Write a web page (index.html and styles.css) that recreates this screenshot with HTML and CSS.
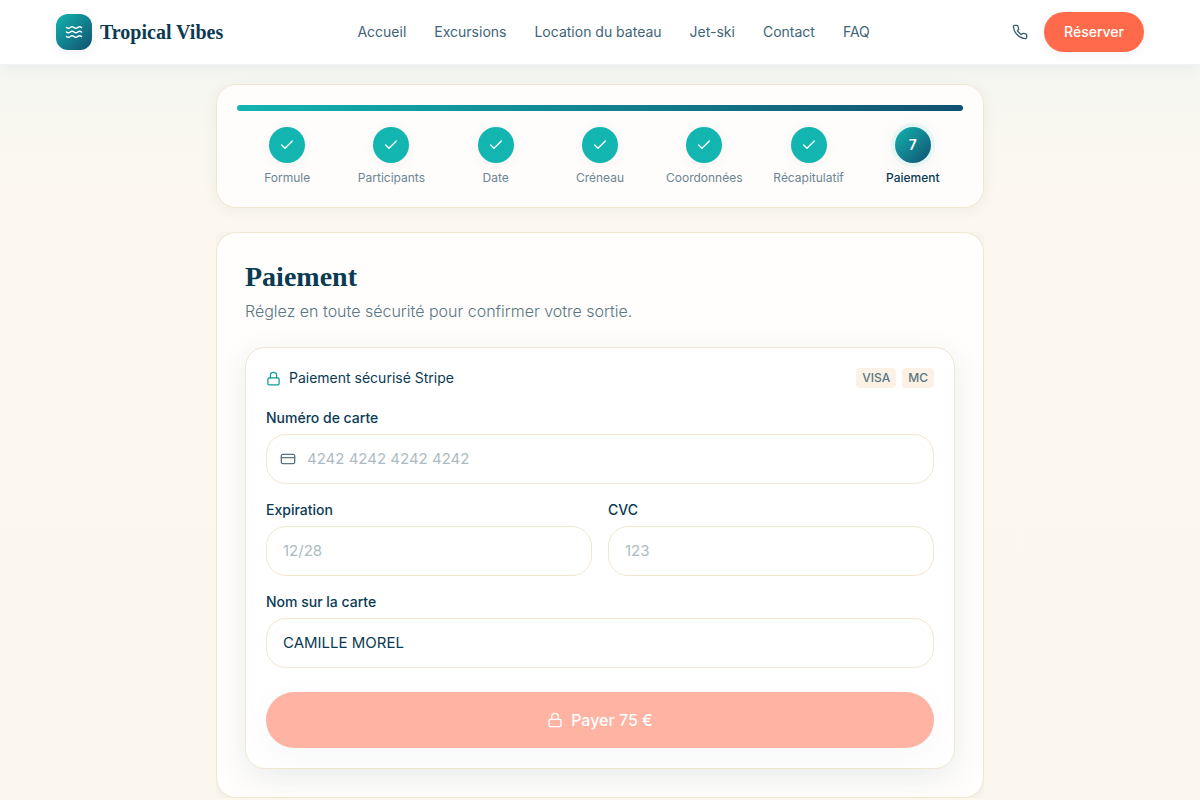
FILE: index.html
```html
<!DOCTYPE html>
<html lang="fr">
<head>
<meta charset="utf-8">
<meta name="viewport" content="width=device-width, initial-scale=1">
<title>Tropical Vibes – Paiement</title>
<link rel="stylesheet" href="styles.css">
</head>
<body>
<svg class="sprite" aria-hidden="true">
  <symbol id="check" viewBox="0 0 24 24"><path d="M20 6 9 17l-5-5"/></symbol>
  <symbol id="lock" viewBox="0 0 24 24"><rect x="3" y="11" width="18" height="11" rx="2"/><path d="M7 11V7a5 5 0 0 1 10 0v4"/></symbol>
</svg>
<header class="header">
  <div class="header-inner">
    <a class="brand" href="#">
      <span class="logo"><svg class="icon icon-18" viewBox="0 0 24 24"><path d="M2 6c.6.5 1.200 1 2.500 1C7 7 7 5 9.500 5c2.600 0 2.400 2 5 2 2.500 0 2.500-2 5-2 1.300 0 1.900.5 2.500 1"/><path d="M2 12c.6.5 1.200 1 2.500 1 2.500 0 2.500-2 5-2 2.600 0 2.400 2 5 2 2.500 0 2.500-2 5-2 1.300 0 1.900.5 2.500 1"/><path d="M2 18c.6.5 1.200 1 2.500 1 2.500 0 2.500-2 5-2 2.600 0 2.400 2 5 2 2.500 0 2.500-2 5-2 1.300 0 1.900.5 2.500 1"/></svg></span>
      <span class="brand-name">Tropical Vibes</span>
    </a>
    <nav class="nav" aria-label="Navigation principale">
      <a href="#">Accueil</a>
      <a href="#">Excursions</a>
      <a href="#">Location du bateau</a>
      <a href="#">Jet-ski</a>
      <a href="#">Contact</a>
      <a href="#">FAQ</a>
    </nav>
    <div class="actions">
      <a class="phone" href="#" aria-label="Téléphone"><svg class="icon icon-16" viewBox="0 0 24 24"><path d="M22 16.920v3a2 2 0 0 1-2.180 2 19.790 19.790 0 0 1-8.630-3.070 19.500 19.500 0 0 1-6-6 19.790 19.790 0 0 1-3.070-8.670A2 2 0 0 1 4.110 2h3a2 2 0 0 1 2 1.720 12.840 12.840 0 0 0 .7 2.810 2 2 0 0 1-.45 2.110L8.090 9.910a16 16 0 0 0 6 6l1.270-1.270a2 2 0 0 1 2.110-.45 12.840 12.840 0 0 0 2.810.7A2 2 0 0 1 22 16.920z"/></svg></a>
      <button class="reserve" type="button">Réserver</button>
    </div>
  </div>
</header>
<main class="main">
  <section class="stepper" aria-label="Étapes">
    <div class="progress"></div>
    <ol class="steps">
      <li><span class="dot"><svg class="icon icon-16" viewBox="0 0 24 24"><use href="#check"/></svg></span><span>Formule</span></li>
      <li><span class="dot"><svg class="icon icon-16" viewBox="0 0 24 24"><use href="#check"/></svg></span><span>Participants</span></li>
      <li><span class="dot"><svg class="icon icon-16" viewBox="0 0 24 24"><use href="#check"/></svg></span><span>Date</span></li>
      <li><span class="dot"><svg class="icon icon-16" viewBox="0 0 24 24"><use href="#check"/></svg></span><span>Créneau</span></li>
      <li><span class="dot"><svg class="icon icon-16" viewBox="0 0 24 24"><use href="#check"/></svg></span><span>Coordonnées</span></li>
      <li><span class="dot"><svg class="icon icon-16" viewBox="0 0 24 24"><use href="#check"/></svg></span><span>Récapitulatif</span></li>
      <li class="current" aria-current="step"><span class="dot">7</span><span>Paiement</span></li>
    </ol>
  </section>
  <div class="panel-clip">
    <section class="panel">
      <h1 class="title">Paiement</h1>
      <p class="lead">Réglez en toute sécurité pour confirmer votre sortie.</p>
      <form class="card">
        <div class="card-head">
          <span class="secure"><svg class="icon icon-15 teal" viewBox="0 0 24 24"><use href="#lock"/></svg>Paiement sécurisé Stripe</span>
          <span class="badges"><span class="badge">VISA</span><span class="badge">MC</span></span>
        </div>
        <div class="field">
          <label for="number">Numéro de carte</label>
          <div class="control">
            <svg class="icon icon-16" viewBox="0 0 24 24"><rect x="2" y="5" width="20" height="14" rx="2"/><path d="M2 10h20"/></svg>
            <input id="number" type="text" placeholder="4242 4242 4242 4242">
          </div>
        </div>
        <div class="pair">
          <div class="field">
            <label for="expiry">Expiration</label>
            <div class="control"><input id="expiry" type="text" placeholder="12/28"></div>
          </div>
          <div class="field">
            <label for="cvc">CVC</label>
            <div class="control"><input id="cvc" type="text" placeholder="123"></div>
          </div>
        </div>
        <div class="field">
          <label for="name">Nom sur la carte</label>
          <div class="control"><input id="name" type="text" value="CAMILLE MOREL"></div>
        </div>
        <button class="pay" type="submit" disabled><svg class="icon icon-16" viewBox="0 0 24 24"><use href="#lock"/></svg>Payer 75 €</button>
      </form>
    </section>
  </div>
</main>
</body>
</html>
```
FILE: styles.css
```css
:root {
  --ink: #0b3a53;
  --muted: #5a7684;
  --teal: #12b5b0;
  --deep: #125070;
  --coral: #ff6b4a;
  --line: #f2e6d0;
}
* { box-sizing: border-box; }
body {
  margin: 0;
  min-height: 100vh;
  font-family: Inter, "Liberation Sans", sans-serif;
  font-size: 15px;
  line-height: 24px;
  color: var(--ink);
  background: #fcf7ee linear-gradient(180deg, #f4f8f5 0, #f7f7f1 100px, #fcf8ef 200px, #fcf7ee 100%) no-repeat;
}
a { color: inherit; text-decoration: none; }
button, input { font: inherit; }
.sprite { position: absolute; width: 0; height: 0; }
.icon {
  flex: none;
  fill: none;
  stroke: currentColor;
  stroke-width: 2;
  stroke-linecap: round;
  stroke-linejoin: round;
}
.icon-15 { width: 15px; height: 15px; }
.icon-16 { width: 16px; height: 16px; }
.icon-18 { width: 18px; height: 18px; }
.teal { color: #0e9c95; }

.header {
  position: relative;
  background: #fff;
  border-bottom: 1px solid #f1f4f4;
  box-shadow: 0 2px 16px rgba(11, 58, 83, 0.07);
}
.header-inner {
  max-width: 1152px;
  height: 64px;
  margin: 0 auto;
  padding: 0 32px;
  display: flex;
  align-items: center;
  justify-content: space-between;
}
.brand { display: flex; align-items: center; gap: 8px; }
.logo {
  display: grid;
  place-items: center;
  width: 36px;
  height: 36px;
  border-radius: 12px;
  color: #fff;
  background: linear-gradient(135deg, var(--teal), var(--deep));
  box-shadow: 0 2px 12px rgba(11, 58, 83, 0.08);
}
.brand-name {
  font-family: "Liberation Serif", serif;
  font-size: 20px;
  font-weight: 700;
}
.nav { display: flex; gap: 28px; font-size: 14px; color: #416478; }
.actions { display: flex; align-items: center; gap: 8px; }
.phone { display: flex; padding: 8px; color: #3b6075; }
.reserve {
  height: 40px;
  padding: 0 20px;
  border: 0;
  border-radius: 20px;
  font-size: 14px;
  font-weight: 500;
  color: #fff;
  background: var(--coral);
  box-shadow: 0 2px 12px rgba(11, 58, 83, 0.06);
}

.main { max-width: 768px; margin: 0 auto; padding-top: 19px; }
.stepper {
  padding: 20px;
  border: 1px solid var(--line);
  border-radius: 20px;
  background: #fefdfb;
  box-shadow: 0 2px 16px rgba(11, 58, 83, 0.06);
}
.progress {
  height: 6px;
  border-radius: 3px;
  background: linear-gradient(90deg, var(--teal), var(--deep));
}
.steps {
  display: grid;
  grid-template-columns: repeat(7, 1fr);
  gap: 4px;
  margin: 16px 0 0;
  padding: 0;
  list-style: none;
  font-size: 12px;
  line-height: 18px;
  color: #6c8592;
}
.steps li { display: flex; flex-direction: column; align-items: center; gap: 6px; }
.dot {
  display: grid;
  place-items: center;
  width: 36px;
  height: 36px;
  border-radius: 50%;
  color: #fff;
  background: var(--teal);
  box-shadow: 0 2px 12px rgba(11, 58, 83, 0.06);
}
.current { color: var(--ink); font-weight: 500; }
.current .dot {
  font-size: 14px;
  font-weight: 600;
  background: linear-gradient(135deg, var(--teal), var(--deep));
  box-shadow: 0 0 0 4px #e5f6f5, 0 4px 24px rgba(11, 58, 83, 0.06);
}

.panel-clip { margin-top: 24px; overflow: hidden; }
.panel {
  padding: 28px;
  border: 1px solid var(--line);
  border-radius: 20px;
  background: #fffefc;
  box-shadow: 0 2px 16px rgba(11, 58, 83, 0.07);
}
.title {
  margin: 0;
  font-family: "Liberation Serif", serif;
  font-size: 28px;
  line-height: 32px;
  font-weight: 700;
}
.lead { margin: 6px 0 24px; font-size: 16px; font-weight: 300; color: var(--muted); }
.card {
  display: flex;
  flex-direction: column;
  gap: 16px;
  padding: 20px;
  border: 1px solid var(--line);
  border-radius: 20px;
  background: #fff;
  box-shadow: 0 8px 32px rgba(11, 58, 83, 0.09);
}
.card-head {
  display: flex;
  justify-content: space-between;
  align-items: center;
  margin-bottom: 4px;
  font-size: 14px;
  line-height: 20px;
}
.secure { display: flex; align-items: center; gap: 8px; }
.badges { display: flex; gap: 6px; }
.badge {
  padding: 0 6px;
  border-radius: 4px;
  font-size: 12px;
  font-weight: 500;
  color: #5a7684;
  background: #fbf2e5;
}
.field { display: flex; flex-direction: column; gap: 6px; }
.field label { font-size: 14px; line-height: 20px; font-weight: 500; }
.pair { display: grid; grid-template-columns: 1fr 1fr; gap: 16px; }
.control {
  display: flex;
  align-items: center;
  height: 50px;
  padding: 0 16px;
  border: 1px solid var(--line);
  border-radius: 20px;
  background: #fff;
}
.control .icon { margin: 0 11px 0 -3px; color: #5a7684; }
.control input {
  flex: 1;
  min-width: 0;
  padding: 0;
  border: 0;
  outline: 0;
  color: var(--ink);
  background: transparent;
}
.control input::placeholder { color: #adbbc2; opacity: 1; }
.pay {
  display: flex;
  align-items: center;
  justify-content: center;
  gap: 8px;
  height: 56px;
  margin-top: 8px;
  border: 0;
  border-radius: 28px;
  font-size: 16px;
  font-weight: 500;
  color: #fff;
  background: #ffb3a3;
  box-shadow: 0 8px 32px rgba(11, 58, 83, 0.04);
}
```
